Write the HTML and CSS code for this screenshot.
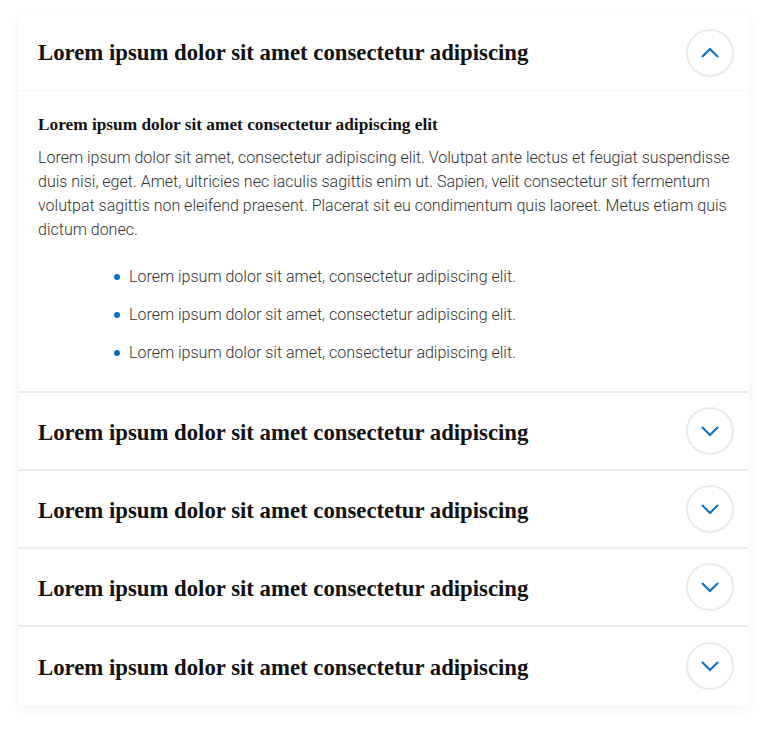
FILE: index.html
```html
<!DOCTYPE html>
<html lang="en">
<head>
<meta charset="utf-8">
<title>Accordion</title>
<link rel="stylesheet" href="styles.css">
</head>
<body>
<div class="page">
  <div class="accordion">
    <section class="item open">
      <div class="header">
        <h2 class="title">Lorem ipsum dolor sit amet consectetur adipiscing</h2>
        <button class="toggle" aria-label="Collapse">
          <svg width="20" height="12" viewBox="0 0 20 12"><path d="M2 10 L10 2 L18 10" fill="none" stroke="#0b6fc0" stroke-width="2"/></svg>
        </button>
      </div>
      <div class="body">
        <h3 class="subtitle">Lorem ipsum dolor sit amet consectetur adipiscing elit</h3>
        <p class="text">Lorem ipsum dolor sit amet, consectetur adipiscing elit. Volutpat ante lectus et feugiat suspendisse duis nisi, eget. Amet, ultricies nec iaculis sagittis enim ut. Sapien, velit consectetur sit fermentum volutpat sagittis non eleifend praesent. Placerat sit eu condimentum quis laoreet. Metus etiam quis dictum donec.</p>
        <ul class="list">
          <li>Lorem ipsum dolor sit amet, consectetur adipiscing elit.</li>
          <li>Lorem ipsum dolor sit amet, consectetur adipiscing elit.</li>
          <li>Lorem ipsum dolor sit amet, consectetur adipiscing elit.</li>
        </ul>
      </div>
    </section>
    <section class="item">
      <div class="header">
        <h2 class="title">Lorem ipsum dolor sit amet consectetur adipiscing</h2>
        <button class="toggle" aria-label="Expand">
          <svg width="20" height="12" viewBox="0 0 20 12"><path d="M2 2 L10 10 L18 2" fill="none" stroke="#0b6fc0" stroke-width="2"/></svg>
        </button>
      </div>
    </section>
    <section class="item">
      <div class="header">
        <h2 class="title">Lorem ipsum dolor sit amet consectetur adipiscing</h2>
        <button class="toggle" aria-label="Expand">
          <svg width="20" height="12" viewBox="0 0 20 12"><path d="M2 2 L10 10 L18 2" fill="none" stroke="#0b6fc0" stroke-width="2"/></svg>
        </button>
      </div>
    </section>
    <section class="item">
      <div class="header">
        <h2 class="title">Lorem ipsum dolor sit amet consectetur adipiscing</h2>
        <button class="toggle" aria-label="Expand">
          <svg width="20" height="12" viewBox="0 0 20 12"><path d="M2 2 L10 10 L18 2" fill="none" stroke="#0b6fc0" stroke-width="2"/></svg>
        </button>
      </div>
    </section>
    <section class="item">
      <div class="header">
        <h2 class="title">Lorem ipsum dolor sit amet consectetur adipiscing</h2>
        <button class="toggle" aria-label="Expand">
          <svg width="20" height="12" viewBox="0 0 20 12"><path d="M2 2 L10 10 L18 2" fill="none" stroke="#0b6fc0" stroke-width="2"/></svg>
        </button>
      </div>
    </section>
  </div>
</div>
</body>
</html>
```
FILE: styles.css
```css
* { box-sizing: border-box; }
html, body { margin: 0; background: #ffffff; }
.page {
  padding: 15px 22px 26px 18px;
}
.accordion {
  width: 730px;
  background: #fff;
  box-shadow: 0 4px 14px rgba(0,0,0,0.05);
}
.item + .item {
  border-top: 2px solid #ececec;
}
.header {
  height: 76px;
  display: flex;
  align-items: center;
  justify-content: space-between;
  padding: 0 14px 0 20px;
}
.item:last-child .header {
  height: 78px;
}
.open .header {
  border-bottom: 1px solid #f6f6f6;
}
.title {
  margin: 0;
  padding-top: 3px;
  font-family: "Liberation Serif", "Times New Roman", serif;
  font-weight: 700;
  font-size: 22.75px;
  color: #111;
  letter-spacing: 0;
}
.open .title {
  padding-top: 1px;
}
.toggle {
  width: 48px;
  height: 48px;
  border-radius: 50%;
  border: 2px solid #ebebeb;
  background: #fff;
  display: flex;
  align-items: center;
  justify-content: center;
  padding: 0;
}
.toggle svg { display: block; }
.body {
  padding: 24px 18px 26px 20px;
}
.subtitle {
  margin: 0;
  font-family: "Liberation Serif", "Times New Roman", serif;
  font-weight: 700;
  font-size: 17.3px;
  line-height: 20px;
  color: #111;
}
.text {
  margin: 11px 0 0;
  font-family: Roboto, "Liberation Sans", sans-serif;
  font-weight: 300;
  font-size: 16px;
  line-height: 24px;
  color: #333;
}
.list {
  list-style: none;
  margin: 23px 0 0;
  padding: 0 0 0 91px;
}
.list li {
  position: relative;
  font-family: Roboto, "Liberation Sans", sans-serif;
  font-weight: 300;
  font-size: 16px;
  line-height: 24px;
  color: #333;
}
.list li + li { margin-top: 14px; }
.list li::before {
  content: "";
  position: absolute;
  left: -15px;
  top: 9px;
  width: 6px;
  height: 6px;
  border-radius: 50%;
  background: #0b6fc0;
}
```
